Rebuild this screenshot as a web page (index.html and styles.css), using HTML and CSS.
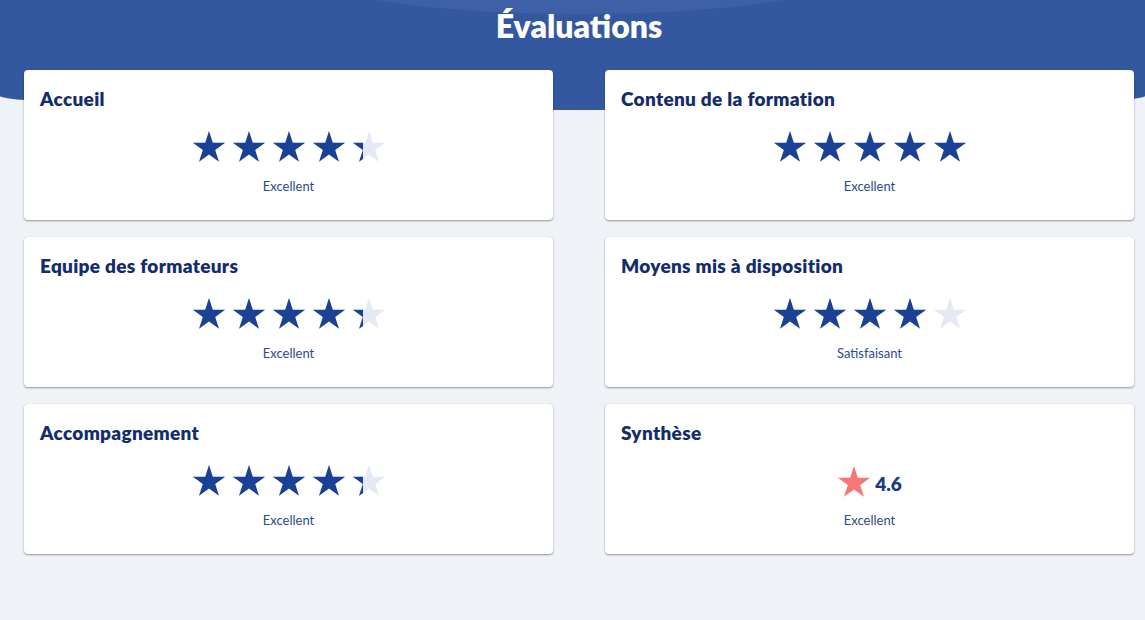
FILE: index.html
```html
<!DOCTYPE html>
<html lang="fr">
<head>
<meta charset="utf-8">
<title>Évaluations</title>
<link rel="stylesheet" href="styles.css">
</head>
<body>
<svg width="0" height="0" class="defs" aria-hidden="true">
  <defs>
    <path id="star" d="M50 0 L61.23 34.55 L97.55 34.55 L68.16 55.9 L79.39 90.45 L50 69.1 L20.61 90.45 L31.84 55.9 L2.45 34.55 L38.77 34.55 Z"/>
  </defs>
</svg>
<header class="hero">
  <h1 class="hero-title">Évaluations</h1>
</header>
<main class="grid">
  <section class="card">
    <h2 class="card-title">Accueil</h2>
    <div class="stars">
      <span class="star"><svg class="s-empty" viewBox="0 0 100 91"><use href="#star"/></svg><span class="s-fill" style="width:100%"><svg viewBox="0 0 100 91"><use href="#star"/></svg></span></span>
      <span class="star"><svg class="s-empty" viewBox="0 0 100 91"><use href="#star"/></svg><span class="s-fill" style="width:100%"><svg viewBox="0 0 100 91"><use href="#star"/></svg></span></span>
      <span class="star"><svg class="s-empty" viewBox="0 0 100 91"><use href="#star"/></svg><span class="s-fill" style="width:100%"><svg viewBox="0 0 100 91"><use href="#star"/></svg></span></span>
      <span class="star"><svg class="s-empty" viewBox="0 0 100 91"><use href="#star"/></svg><span class="s-fill" style="width:100%"><svg viewBox="0 0 100 91"><use href="#star"/></svg></span></span>
      <span class="star"><svg class="s-empty" viewBox="0 0 100 91"><use href="#star"/></svg><span class="s-fill" style="width:34%"><svg viewBox="0 0 100 91"><use href="#star"/></svg></span></span>
    </div>
    <p class="label">Excellent</p>
  </section>
  <section class="card">
    <h2 class="card-title">Contenu de la formation</h2>
    <div class="stars">
      <span class="star"><svg class="s-empty" viewBox="0 0 100 91"><use href="#star"/></svg><span class="s-fill" style="width:100%"><svg viewBox="0 0 100 91"><use href="#star"/></svg></span></span>
      <span class="star"><svg class="s-empty" viewBox="0 0 100 91"><use href="#star"/></svg><span class="s-fill" style="width:100%"><svg viewBox="0 0 100 91"><use href="#star"/></svg></span></span>
      <span class="star"><svg class="s-empty" viewBox="0 0 100 91"><use href="#star"/></svg><span class="s-fill" style="width:100%"><svg viewBox="0 0 100 91"><use href="#star"/></svg></span></span>
      <span class="star"><svg class="s-empty" viewBox="0 0 100 91"><use href="#star"/></svg><span class="s-fill" style="width:100%"><svg viewBox="0 0 100 91"><use href="#star"/></svg></span></span>
      <span class="star"><svg class="s-empty" viewBox="0 0 100 91"><use href="#star"/></svg><span class="s-fill" style="width:100%"><svg viewBox="0 0 100 91"><use href="#star"/></svg></span></span>
    </div>
    <p class="label">Excellent</p>
  </section>
  <section class="card">
    <h2 class="card-title">Equipe des formateurs</h2>
    <div class="stars">
      <span class="star"><svg class="s-empty" viewBox="0 0 100 91"><use href="#star"/></svg><span class="s-fill" style="width:100%"><svg viewBox="0 0 100 91"><use href="#star"/></svg></span></span>
      <span class="star"><svg class="s-empty" viewBox="0 0 100 91"><use href="#star"/></svg><span class="s-fill" style="width:100%"><svg viewBox="0 0 100 91"><use href="#star"/></svg></span></span>
      <span class="star"><svg class="s-empty" viewBox="0 0 100 91"><use href="#star"/></svg><span class="s-fill" style="width:100%"><svg viewBox="0 0 100 91"><use href="#star"/></svg></span></span>
      <span class="star"><svg class="s-empty" viewBox="0 0 100 91"><use href="#star"/></svg><span class="s-fill" style="width:100%"><svg viewBox="0 0 100 91"><use href="#star"/></svg></span></span>
      <span class="star"><svg class="s-empty" viewBox="0 0 100 91"><use href="#star"/></svg><span class="s-fill" style="width:34%"><svg viewBox="0 0 100 91"><use href="#star"/></svg></span></span>
    </div>
    <p class="label">Excellent</p>
  </section>
  <section class="card">
    <h2 class="card-title">Moyens mis à disposition</h2>
    <div class="stars">
      <span class="star"><svg class="s-empty" viewBox="0 0 100 91"><use href="#star"/></svg><span class="s-fill" style="width:100%"><svg viewBox="0 0 100 91"><use href="#star"/></svg></span></span>
      <span class="star"><svg class="s-empty" viewBox="0 0 100 91"><use href="#star"/></svg><span class="s-fill" style="width:100%"><svg viewBox="0 0 100 91"><use href="#star"/></svg></span></span>
      <span class="star"><svg class="s-empty" viewBox="0 0 100 91"><use href="#star"/></svg><span class="s-fill" style="width:100%"><svg viewBox="0 0 100 91"><use href="#star"/></svg></span></span>
      <span class="star"><svg class="s-empty" viewBox="0 0 100 91"><use href="#star"/></svg><span class="s-fill" style="width:100%"><svg viewBox="0 0 100 91"><use href="#star"/></svg></span></span>
      <span class="star"><svg class="s-empty" viewBox="0 0 100 91"><use href="#star"/></svg><span class="s-fill" style="width:0%"><svg viewBox="0 0 100 91"><use href="#star"/></svg></span></span>
    </div>
    <p class="label">Satisfaisant</p>
  </section>
  <section class="card">
    <h2 class="card-title">Accompagnement</h2>
    <div class="stars">
      <span class="star"><svg class="s-empty" viewBox="0 0 100 91"><use href="#star"/></svg><span class="s-fill" style="width:100%"><svg viewBox="0 0 100 91"><use href="#star"/></svg></span></span>
      <span class="star"><svg class="s-empty" viewBox="0 0 100 91"><use href="#star"/></svg><span class="s-fill" style="width:100%"><svg viewBox="0 0 100 91"><use href="#star"/></svg></span></span>
      <span class="star"><svg class="s-empty" viewBox="0 0 100 91"><use href="#star"/></svg><span class="s-fill" style="width:100%"><svg viewBox="0 0 100 91"><use href="#star"/></svg></span></span>
      <span class="star"><svg class="s-empty" viewBox="0 0 100 91"><use href="#star"/></svg><span class="s-fill" style="width:100%"><svg viewBox="0 0 100 91"><use href="#star"/></svg></span></span>
      <span class="star"><svg class="s-empty" viewBox="0 0 100 91"><use href="#star"/></svg><span class="s-fill" style="width:34%"><svg viewBox="0 0 100 91"><use href="#star"/></svg></span></span>
    </div>
    <p class="label">Excellent</p>
  </section>
  <section class="card">
    <h2 class="card-title">Synthèse</h2>
    <div class="stars synth">
      <svg class="synth-star" viewBox="0 0 100 91"><use href="#star"/></svg>
      <span class="score">4.6</span>
    </div>
    <p class="label">Excellent</p>
  </section>
</main>
</body>
</html>
```
FILE: styles.css
```css
* { box-sizing: border-box; }

html, body {
  margin: 0;
  padding: 0;
}

body {
  background: #eff2f7;
  font-family: Lato, "Noto Sans", "Liberation Sans", sans-serif;
  width: 1145px;
  height: 620px;
  overflow: hidden;
}

.defs {
  position: absolute;
  width: 0;
  height: 0;
}

.hero {
  position: relative;
  height: 110px;
  background: #3358a0;
  border-radius: 0 0 50% 50% / 0 0 14px 14px;
  overflow: hidden;
  padding: 7px 11px 0 24px;
}

.hero::before {
  content: "";
  position: absolute;
  left: 320px;
  width: 520px;
  top: -60px;
  height: 74px;
  border-radius: 50%;
  background: #3e60a6;
}

.hero-title {
  position: relative;
  margin: 0;
  text-align: center;
  color: #ffffff;
  font-size: 32px;
  line-height: 38px;
  font-weight: 800;
  letter-spacing: 0;
}

.grid {
  display: grid;
  grid-template-columns: 1fr 1fr;
  column-gap: 52px;
  row-gap: 17px;
  padding: 0 11px 0 24px;
  margin-top: -40px;
}

.card {
  position: relative;
  background: #ffffff;
  border-radius: 4px;
  height: 150px;
  padding: 17px 16px 0;
  box-shadow: 0 1px 2px rgba(0, 0, 0, 0.38), 0 0 1px rgba(0, 0, 0, 0.15);
  display: flex;
  flex-direction: column;
  align-items: stretch;
}

.card-title {
  margin: 0;
  font-size: 19px;
  line-height: 23px;
  font-weight: 800;
  color: #132d6c;
  letter-spacing: 0.3px;
}

.stars {
  margin-top: 21px;
  display: flex;
  justify-content: center;
  gap: 6px;
  height: 33px;
}

.star {
  position: relative;
  width: 34px;
  height: 33px;
  display: block;
}

.star svg {
  display: block;
  width: 34px;
  height: 31px;
}

.s-empty {
  fill: #e4e9f3;
}

.s-fill {
  position: absolute;
  left: 0;
  top: 0;
  height: 33px;
  overflow: hidden;
  fill: #1b4194;
}

.synth {
  align-items: center;
  gap: 4px;
}

.synth-star {
  width: 34px;
  height: 31px;
  fill: #f77779;
  display: block;
}

.score {
  font-size: 19px;
  font-weight: 800;
  color: #1b3a85;
  margin-top: 4px;
}

.label {
  margin: 14px 0 0;
  text-align: center;
  font-size: 13px;
  line-height: 16px;
  color: #2e4a8c;
}
```
